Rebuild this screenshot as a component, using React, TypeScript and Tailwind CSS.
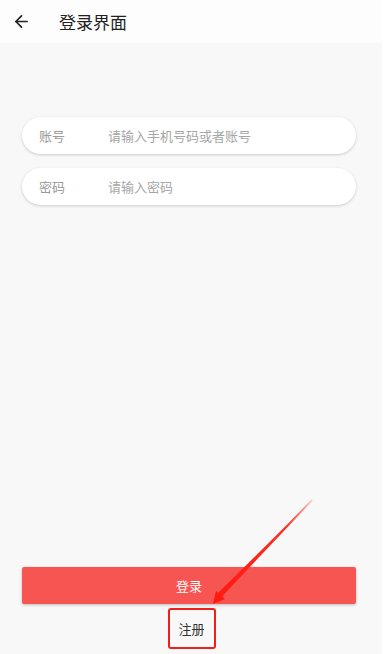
import { ArrowLeft } from "lucide-react";

const font = { fontFamily: '"Noto Sans CJK SC", "Noto Sans", sans-serif' };

function Field({ label, placeholder }: { label: string; placeholder: string }) {
  return (
    <div className="flex h-[37px] items-center rounded-full bg-white pl-[17px] shadow-[0_1px_3px_rgba(0,0,0,0.18)]">
      <span className="w-[69px] text-[13px] text-[#9a9a9a]">{label}</span>
      <span className="text-[13px] text-[#a6a6a6]">{placeholder}</span>
    </div>
  );
}

export default function App() {
  return (
    <div className="flex h-[654px] w-[387px] bg-white" style={font}>
      <div className="relative flex h-full w-[382px] flex-col bg-[#f8f8f8]">
        {/* Header */}
        <div className="flex h-[43px] items-center bg-[#fdfdfd] pl-[12px]">
          <ArrowLeft className="h-[19px] w-[19px] text-[#222]" strokeWidth={2.2} />
          <span className="ml-[28px] text-[17px] text-[#222]">登录界面</span>
        </div>

        {/* Inputs */}
        <div className="mt-[74px] flex flex-col gap-[14px] px-[22px] pr-[26px]">
          <Field label="账号" placeholder="请输入手机号码或者账号" />
          <Field label="密码" placeholder="请输入密码" />
        </div>

        <div className="flex-1" />

        {/* Actions */}
        <div className="px-[22px] pr-[26px]">
          <button className="flex h-[37px] w-full items-center justify-center rounded-[2px] bg-[#f75552] text-[13px] text-white shadow-[0_1px_3px_rgba(0,0,0,0.25)]">
            登录
          </button>
        </div>
        <div className="mb-[5px] mt-[4px] flex justify-center">
          <div className="ml-[1px] flex h-[41px] w-[48px] items-center justify-center rounded-[3px] border-2 border-[#f0201c] text-[13px] text-[#333]">
            注册
          </div>
        </div>

        {/* Annotation arrow */}
        <svg className="pointer-events-none absolute left-0 top-0" width="382" height="654">
          <defs>
            <linearGradient id="g" x1="312" y1="500" x2="218" y2="600" gradientUnits="userSpaceOnUse">
              <stop offset="0" stopColor="#ff3a30" stopOpacity="0.2" />
              <stop offset="0.3" stopColor="#ff2a20" />
              <stop offset="1" stopColor="#ff1a10" />
            </linearGradient>
          </defs>
          <path d="M312 500 L221 596 L218 593 Z" fill="url(#g)" />
          <line x1="312" y1="500" x2="220" y2="597" stroke="url(#g)" strokeWidth="2" />
          <path d="M213 604 L216 591 L225 599 Z" fill="#ff1a10" />
        </svg>
      </div>
    </div>
  );
}
